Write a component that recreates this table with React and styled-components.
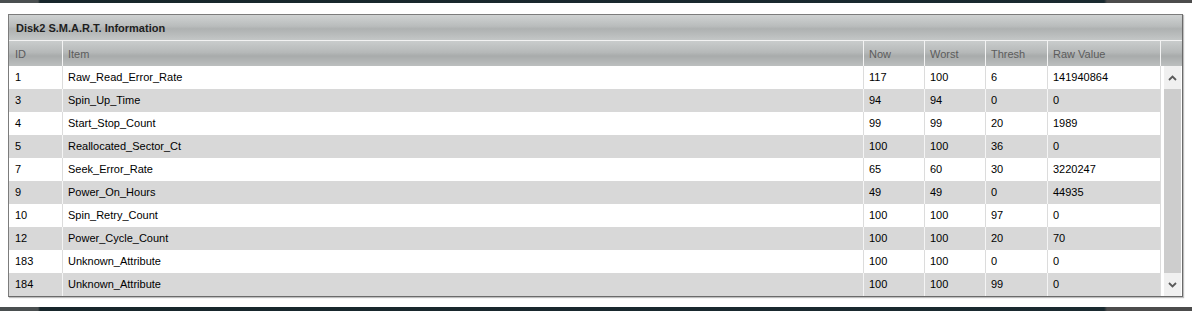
import React from "react";
import styled, { createGlobalStyle } from "styled-components";

const GlobalStyle = createGlobalStyle`
	html, body {
		margin: 0;
		padding: 0;
		background: #fff;
	}
	body {
		font-family: Tahoma, "Liberation Sans", Arial, sans-serif;
		font-size: 11px;
	}
`;

const COLS = "53px 801px 61px 61px 62px 113px";

const Page = styled.div`
	width: 1192px;
	height: 311px;
	display: flex;
	flex-direction: column;
	overflow: hidden;
`;

const Strip = styled.div`
	height: ${(p) => p.h}px;
	flex-shrink: 0;
	background: linear-gradient(
		to right,
		#4a4f50 0,
		#4a4f50 38px,
		#17262b 40px,
		#1a2a30 1104px,
		#4c4c4c 1107px,
		#4c4c4c 100%
	);
`;

const Spacer = styled.div`
	flex: 1;
`;

const Panel = styled.div`
	margin: 11px 9px 0 8px;
	border: 1px solid #7c7c7c;
	border-right-color: #6a6a6a;
	border-bottom-color: #6a6a6a;
	box-shadow: 1px 1px 1px rgba(0, 0, 0, 0.25);
	background: #fff;
`;

const TitleBar = styled.div`
	height: 25px;
	display: flex;
	align-items: center;
	padding-left: 7px;
	font-weight: bold;
	color: #1e1e1e;
	background: linear-gradient(#cfd2d2 0%, #b9bcbc 45%, #aeb1b1 55%, #c3c6c6 100%);
	border-bottom: 1px solid #f2f2f2;
`;

const Header = styled.div`
	display: grid;
	grid-template-columns: ${COLS} 1fr;
	height: 25px;
	background: linear-gradient(#c9cccc 0%, #b6b9b9 45%, #a8abab 60%, #bcbfbf 100%);
`;

const HeadCell = styled.div`
	display: flex;
	align-items: center;
	padding-left: ${(p) => (p.first ? 6 : 5)}px;
	color: #5c5c5c;
	border-left: ${(p) => (p.first ? "none" : "1px solid #f3f3f3")};
`;

const Body = styled.div`
	display: flex;
`;

const Rows = styled.div`
	width: 1151px;
`;

const Row = styled.div`
	display: grid;
	grid-template-columns: ${COLS};
	height: 23px;
	background: ${(p) => (p.alt ? "#d8d8d8" : "#fff")};
`;

const Cell = styled.div`
	display: flex;
	align-items: center;
	padding-left: ${(p) => (p.first ? 6 : 5)}px;
	padding-bottom: 1px;
	color: #000;
	white-space: nowrap;
	border-left: ${(p) => (p.first ? "none" : p.alt ? "1px solid #f4f4f4" : "1px solid #dcdcdc")};
`;

const ScrollCol = styled.div`
	flex: 1;
	border-left: 1px solid #dcdcdc;
	padding-left: 3px;
	padding-right: 1px;
	display: flex;
	flex-direction: column;
`;

const Track = styled.div`
	flex: 1;
	display: flex;
	flex-direction: column;
	background: #cdcdcd;
`;

const Arrow = styled.div`
	height: 23px;
	background: #f0f0f0;
	display: flex;
	align-items: center;
	justify-content: center;
`;

const Thumb = styled.div`
	flex: 1;
`;

const Chevron = ({ up }) => (
	<svg width="9" height="6" viewBox="0 0 9 6">
		<path
			d={up ? "M1 5 L4.5 1.5 L8 5" : "M1 1 L4.5 4.5 L8 1"}
			fill="none"
			stroke="#5a5a5a"
			strokeWidth="1.8"
		/>
	</svg>
);

const columns = ["ID", "Item", "Now", "Worst", "Thresh", "Raw Value"];

const data = [
	["1", "Raw_Read_Error_Rate", "117", "100", "6", "141940864"],
	["3", "Spin_Up_Time", "94", "94", "0", "0"],
	["4", "Start_Stop_Count", "99", "99", "20", "1989"],
	["5", "Reallocated_Sector_Ct", "100", "100", "36", "0"],
	["7", "Seek_Error_Rate", "65", "60", "30", "3220247"],
	["9", "Power_On_Hours", "49", "49", "0", "44935"],
	["10", "Spin_Retry_Count", "100", "100", "97", "0"],
	["12", "Power_Cycle_Count", "100", "100", "20", "70"],
	["183", "Unknown_Attribute", "100", "100", "0", "0"],
	["184", "Unknown_Attribute", "100", "100", "99", "0"],
];

const App = () => {
	return (
		<Page>
			<GlobalStyle />
			<Strip h={3} />
			<Panel>
				<TitleBar>Disk2 S.M.A.R.T. Information</TitleBar>
				<Header>
					{columns.map((c, i) => (
						<HeadCell key={c} first={i === 0}>
							{c}
						</HeadCell>
					))}
					<HeadCell />
				</Header>
				<Body>
					<Rows>
						{data.map((r, i) => (
							<Row key={r[0]} alt={i % 2 === 1}>
								{r.map((v, j) => (
									<Cell key={j} first={j === 0} alt={i % 2 === 1}>
										{v}
									</Cell>
								))}
							</Row>
						))}
					</Rows>
					<ScrollCol>
						<Track>
							<Arrow>
								<Chevron up />
							</Arrow>
							<Thumb />
							<Arrow>
								<Chevron />
							</Arrow>
						</Track>
					</ScrollCol>
				</Body>
			</Panel>
			<Spacer />
			<Strip h={4} />
		</Page>
	);
};

export default App;
